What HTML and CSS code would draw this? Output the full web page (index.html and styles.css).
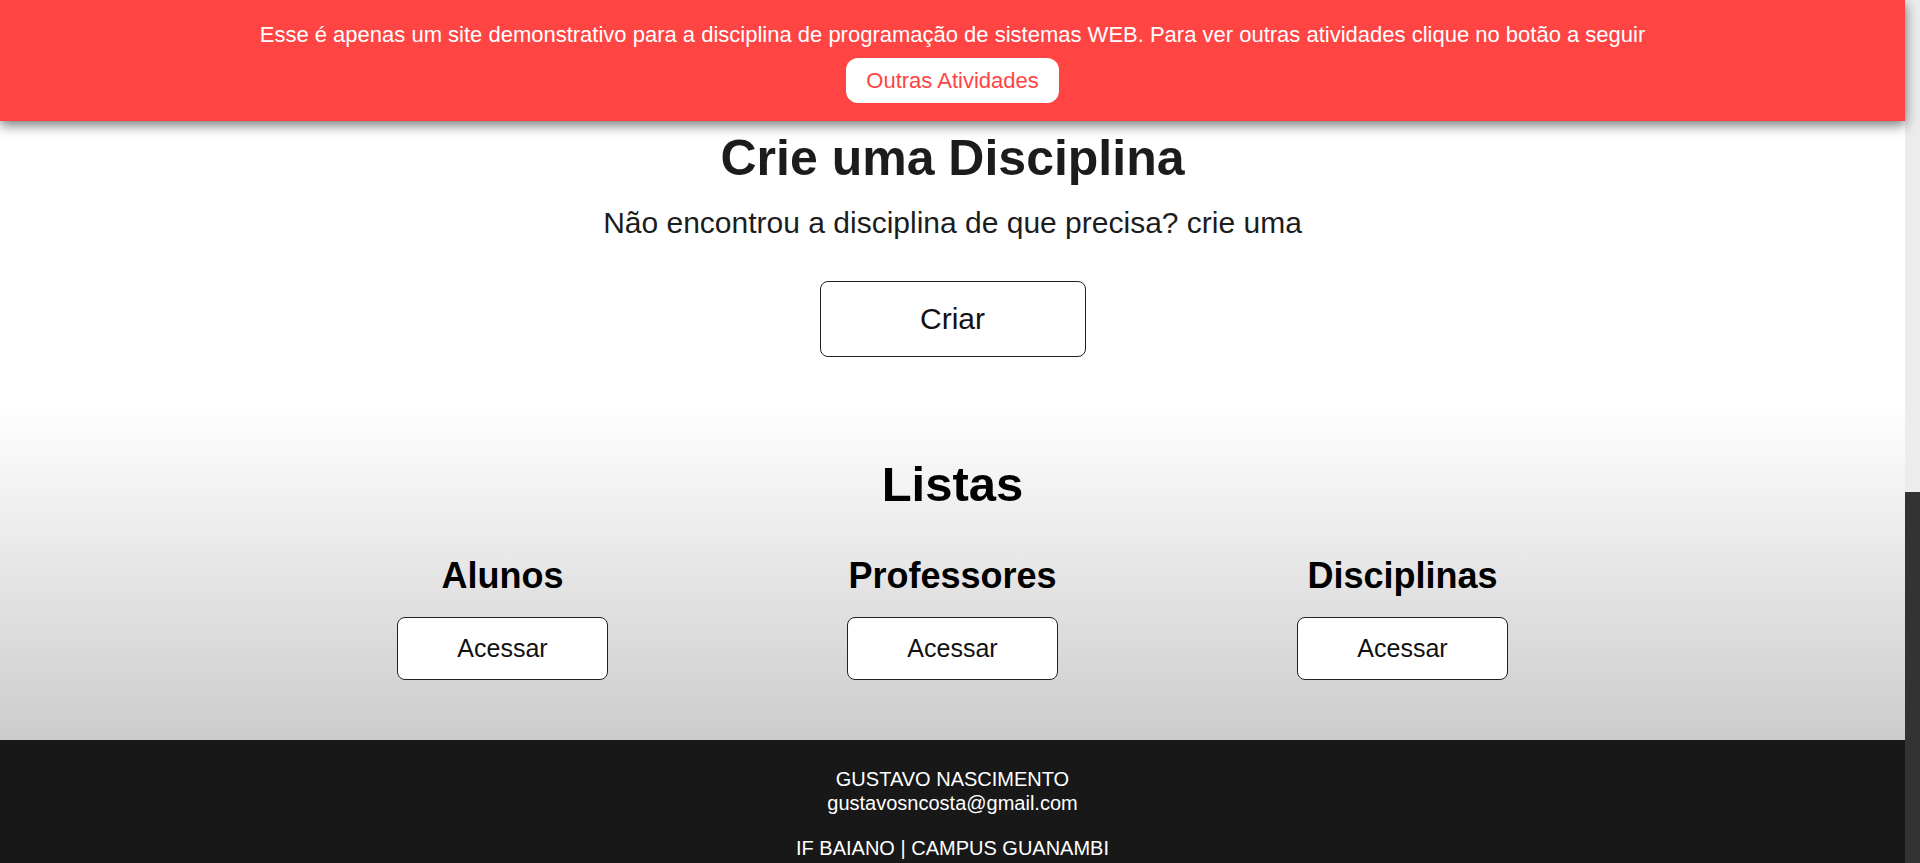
FILE: index.html
```html
<!DOCTYPE html>
<html lang="pt-BR">
<head>
<meta charset="utf-8">
<title>Disciplinas</title>
<link rel="stylesheet" href="styles.css">
</head>
<body>
<div class="main">
  <header class="notice">
    <p class="notice-text">Esse é apenas um site demonstrativo para a disciplina de programação de sistemas WEB. Para ver outras atividades clique no botão a seguir</p>
    <a class="notice-btn" href="#">Outras Atividades</a>
  </header>
  <section class="create">
    <h1 class="create-title">Crie uma Disciplina</h1>
    <p class="create-sub">Não encontrou a disciplina de que precisa? crie uma</p>
    <a class="btn btn-large" href="#">Criar</a>
  </section>
  <section class="lists">
    <h2 class="lists-title">Listas</h2>
    <div class="lists-grid">
      <div class="list-col">
        <h3 class="list-name">Alunos</h3>
        <a class="btn btn-small" href="#">Acessar</a>
      </div>
      <div class="list-col">
        <h3 class="list-name">Professores</h3>
        <a class="btn btn-small" href="#">Acessar</a>
      </div>
      <div class="list-col">
        <h3 class="list-name">Disciplinas</h3>
        <a class="btn btn-small" href="#">Acessar</a>
      </div>
    </div>
  </section>
  <footer class="footer">
    <p class="footer-line">GUSTAVO NASCIMENTO<br>gustavosncosta@gmail.com</p>
    <p class="footer-line">IF BAIANO | CAMPUS GUANAMBI</p>
  </footer>
</div>
<div class="scrollbar" aria-hidden="true">
  <div class="scrollbar-thumb"></div>
</div>
</body>
</html>
```
FILE: styles.css
```css
* { box-sizing: border-box; }
html, body {
  margin: 0;
  padding: 0;
  height: 100%;
  overflow: hidden;
}
body {
  display: flex;
  font-family: "Liberation Sans", Arial, sans-serif;
  background: #ffffff;
  color: #1c1c1c;
}
.main {
  flex: 1;
  min-width: 0;
  display: flex;
  flex-direction: column;
}
.scrollbar {
  flex: none;
  width: 15px;
  height: 100vh;
  background: #ececec;
  display: flex;
  flex-direction: column;
}
.scrollbar-thumb {
  margin-top: auto;
  height: 371px;
  background: #333333;
}

.notice {
  position: relative;
  z-index: 2;
  flex: none;
  height: 121px;
  background: #ff4444;
  box-shadow: 0 4px 12px rgba(0, 0, 0, 0.55);
  display: flex;
  flex-direction: column;
  align-items: center;
  padding-top: 22px;
}
.notice-text {
  margin: 0 0 11px;
  color: #ffffff;
  font-size: 22px;
  line-height: 25px;
}
.notice-btn {
  display: flex;
  align-items: center;
  height: 45px;
  padding: 0 20px;
  background: #ffffff;
  color: #ff4444;
  border-radius: 12px;
  font-size: 22px;
  text-decoration: none;
}

.create {
  flex: none;
  height: 283px;
  display: flex;
  flex-direction: column;
  align-items: center;
  padding-top: 8px;
  background: #ffffff;
}
.create-title {
  margin: 0 0 19px;
  font-size: 50px;
  line-height: 58px;
  font-weight: 700;
  color: #1c1c1c;
}
.create-sub {
  margin: 0 0 41px;
  font-size: 30px;
  line-height: 34px;
  color: #1c1c1c;
}

.btn {
  display: flex;
  align-items: center;
  justify-content: center;
  background: #ffffff;
  border: 1px solid #222222;
  border-radius: 8px;
  color: #111111;
  text-decoration: none;
}
.btn-large {
  width: 266px;
  height: 76px;
  font-size: 30px;
}
.btn-small {
  width: 211px;
  height: 63px;
  font-size: 25px;
}

.lists {
  flex: none;
  height: 336px;
  padding-top: 52px;
  background: linear-gradient(to bottom, #ffffff, #cccccc);
  text-align: center;
}
.lists-title {
  margin: 0 0 43px;
  font-size: 49px;
  line-height: 56px;
  font-weight: 700;
  color: #000000;
}
.lists-grid {
  display: grid;
  grid-template-columns: repeat(3, 450px);
  justify-content: center;
}
.list-col {
  display: flex;
  flex-direction: column;
  align-items: center;
  gap: 21px;
}
.list-name {
  margin: 0;
  font-size: 36px;
  line-height: 41px;
  font-weight: 700;
  color: #000000;
}

.footer {
  flex: 1;
  padding-top: 27px;
  background: #181818;
  color: #ffffff;
  text-align: center;
}
.footer-line {
  margin: 0 0 21px;
  font-size: 20px;
  line-height: 24px;
}
```
